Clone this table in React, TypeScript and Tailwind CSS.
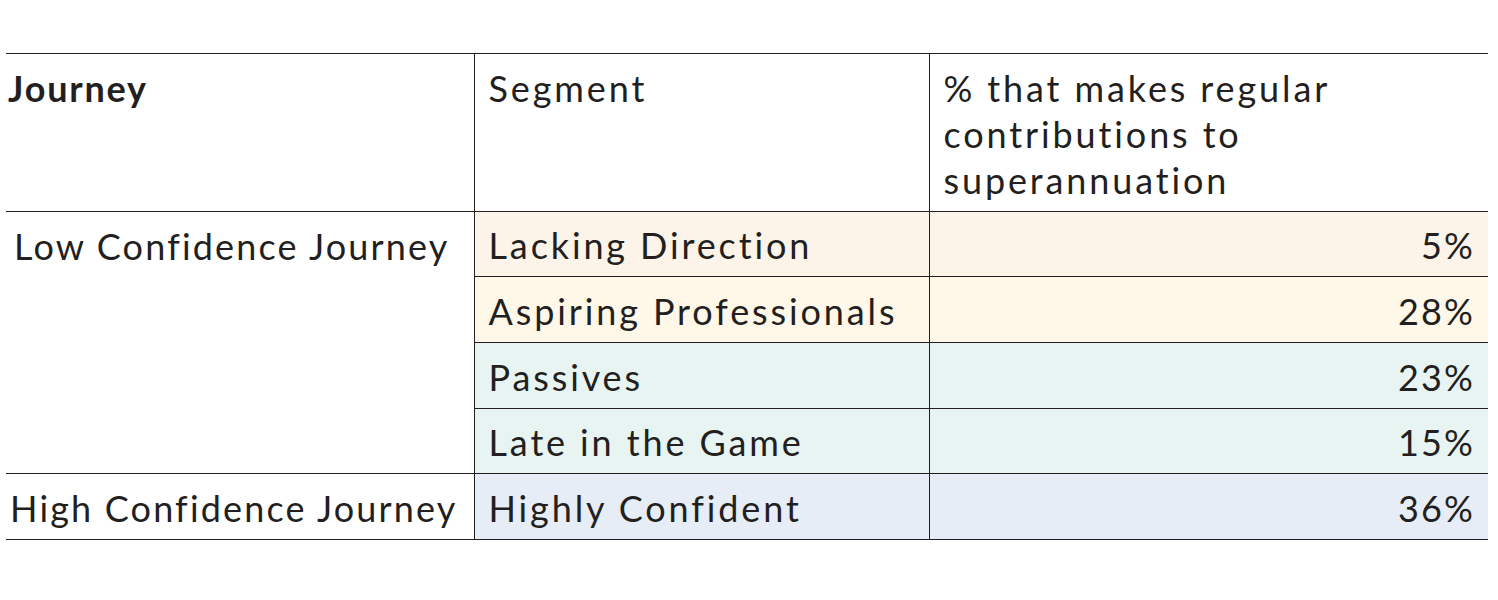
export default function App() {
  const line = "border-[#231f20]";
  const seg = "px-[14px] pt-[2px] align-middle tracking-[0.08em]";
  const pct = "pr-[13px] pt-[2px] text-right align-middle tracking-[0.06em]";
  return (
    <div className="min-h-[600px] bg-white pt-[53px] pl-[6px] text-[#231f20] font-['Lato',sans-serif]">
      <table className="w-[1482px] border-collapse text-[36px] leading-[46px]">
        <colgroup>
          <col className="w-[468px]" />
          <col className="w-[455px]" />
          <col className="w-[559px]" />
        </colgroup>
        <thead>
          <tr className={`h-[158px] border-y ${line}`}>
            <th className="pl-[2px] pt-[11px] text-left align-top font-bold tracking-[0.05em]">Journey</th>
            <th className={`border-x ${line} px-[14px] pt-[11px] text-left align-top font-normal tracking-[0.08em]`}>
              Segment
            </th>
            <th className="px-[14px] pt-[11px] text-left align-top font-normal tracking-[0.08em]">
              % that makes regular contributions to superannuation
            </th>
          </tr>
        </thead>
        <tbody>
          <tr className={`h-[65px] border-b ${line}`}>
            <td
              rowSpan={4}
              className={`border-r ${line} pr-[16px] pt-[11px] text-center align-top tracking-[0.06em]`}
            >
              Low Confidence Journey
            </td>
            <td className={`${seg} border-r ${line} bg-[#fcf4e9]`}>Lacking Direction</td>
            <td className={`${pct} bg-[#fcf4e9]`}>5%</td>
          </tr>
          <tr className={`h-[66px] border-b ${line}`}>
            <td className={`${seg} border-r ${line} bg-[#fff8e9]`}>Aspiring Professionals</td>
            <td className={`${pct} bg-[#fff8e9]`}>28%</td>
          </tr>
          <tr className={`h-[66px] border-b ${line}`}>
            <td className={`${seg} border-r ${line} bg-[#e7f4f2]`}>Passives</td>
            <td className={`${pct} bg-[#e7f4f2]`}>23%</td>
          </tr>
          <tr className={`h-[65px] border-b ${line}`}>
            <td className={`${seg} border-r ${line} bg-[#e7f4f2]`}>Late in the Game</td>
            <td className={`${pct} bg-[#e7f4f2]`}>15%</td>
          </tr>
          <tr className={`h-[66px] border-b ${line}`}>
            <td className={`border-r ${line} pr-[12px] pt-[2px] text-center align-middle tracking-[0.06em]`}>
              High Confidence Journey
            </td>
            <td className={`${seg} border-r ${line} bg-[#e7edf6]`}>Highly Confident</td>
            <td className={`${pct} bg-[#e7edf6]`}>36%</td>
          </tr>
        </tbody>
      </table>
    </div>
  );
}
